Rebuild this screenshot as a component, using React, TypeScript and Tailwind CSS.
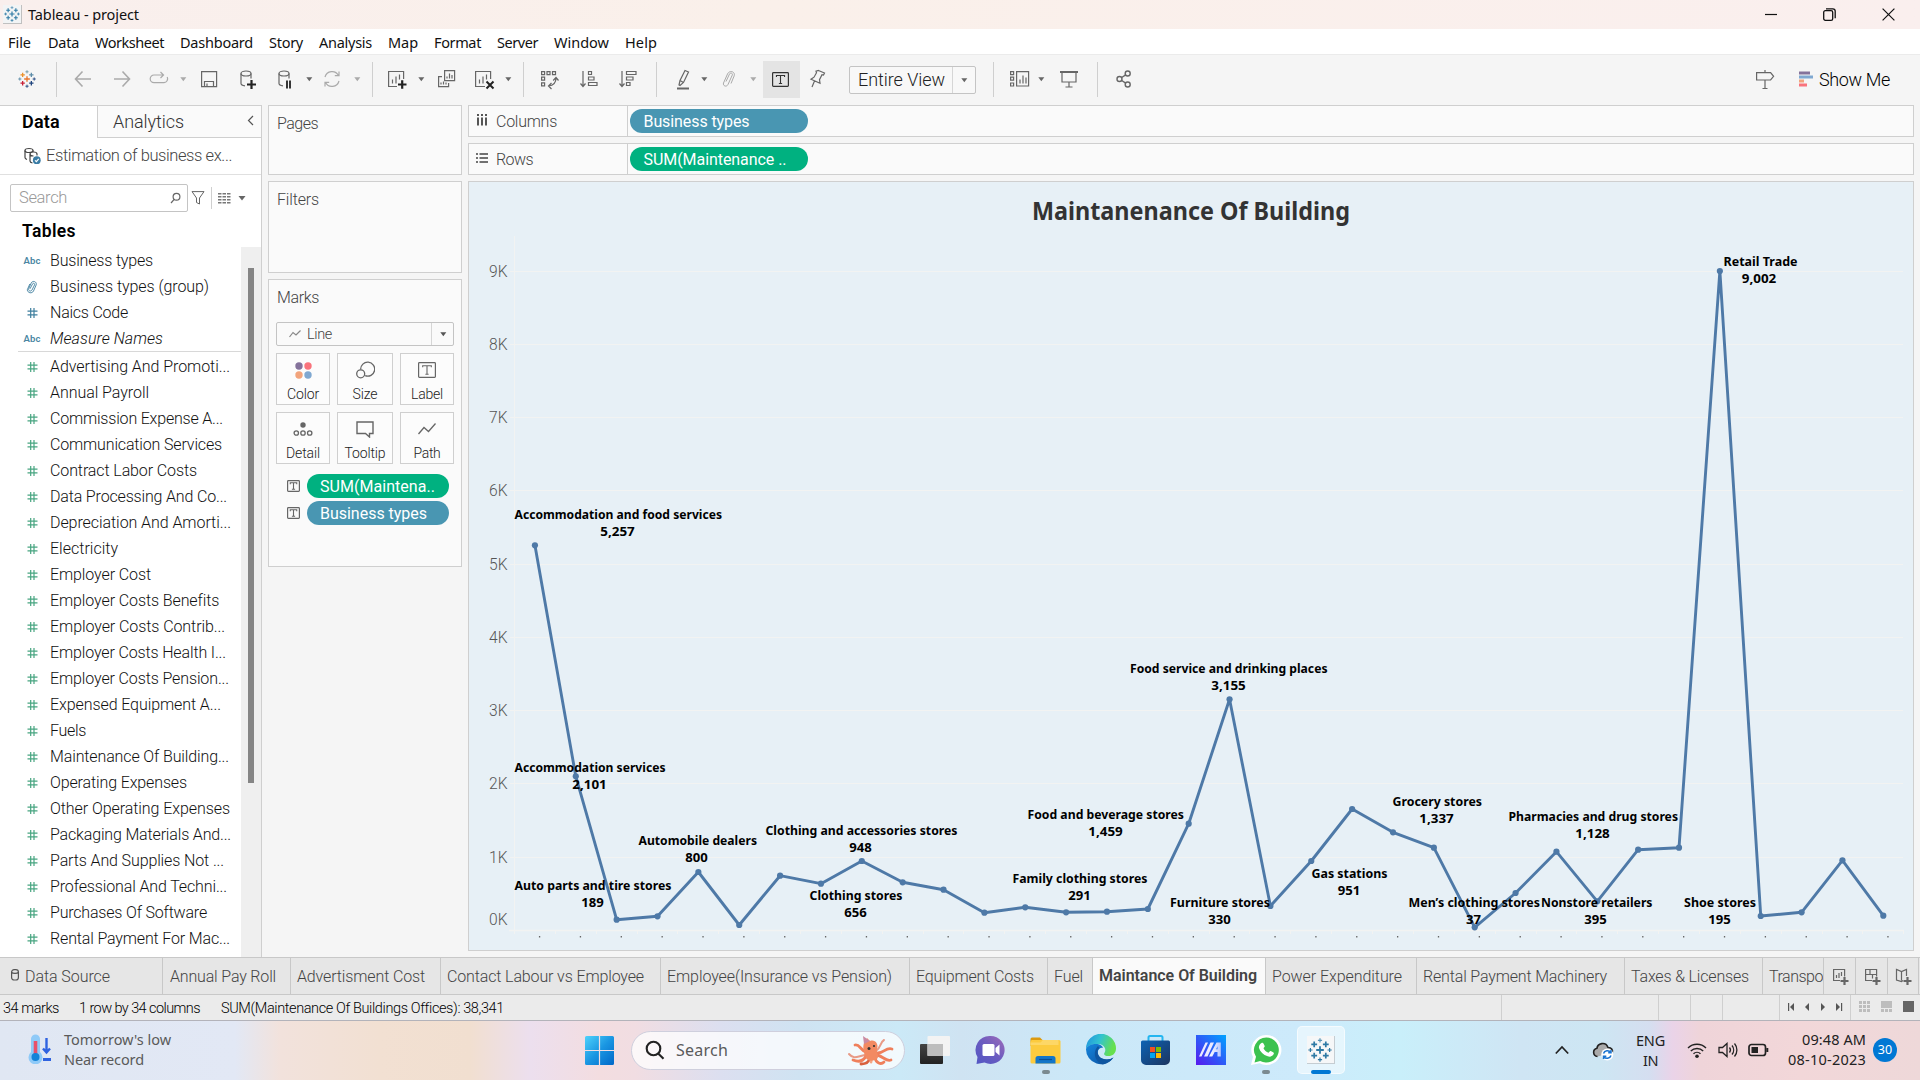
import { useLayoutEffect, useRef, useState, type ReactNode } from "react";

/** Text tracked so that it fills the given width. */
function Fit({ w, children, className = "" }: { w: number; children: string; className?: string }) {
  const ref = useRef<HTMLSpanElement>(null);
  const [spacing, setSpacing] = useState(0);
  useLayoutEffect(() => {
    const el = ref.current;
    if (!el) return;
    const natural = el.getBoundingClientRect().width;
    setSpacing((w - natural) / children.length);
  }, [w, children]);
  return (
    <span ref={ref} className={"inline-block whitespace-pre " + className} style={{ letterSpacing: spacing }}>
      {children}
    </span>
  );
}

function Icon({ w = 20, h = 24, className = "", sw = 1.2, children }: { w?: number; h?: number; className?: string; sw?: number; children: ReactNode }) {
  return (
    <svg width={w} height={h} viewBox={`0 0 ${w} ${h}`} fill="none" stroke="currentColor" strokeWidth={sw} className={"shrink-0 " + className}>
      {children}
    </svg>
  );
}

function Caret({ className = "" }: { className?: string }) {
  return (
    <svg width="8" height="8" viewBox="0 0 8 8" className={"shrink-0 " + className}>
      <path d="M1.300 2.200h6L4.300 6.200z" fill="currentColor" />
    </svg>
  );
}

const Sep = ({ className = "" }: { className?: string }) => <div className={"h-[35px] w-px shrink-0 bg-[#cfcfcf] " + className} />;

function Plus({ x, y, s, c, w = 1.4 }: { x: number; y: number; s: number; c: string; w?: number }) {
  return <path d={`M${x - s} ${y}H${x + s}M${x} ${y - s}V${y + s}`} stroke={c} strokeWidth={w} />;
}

function TableauMark({ size, mono = false, className = "" }: { size: number; mono?: boolean; className?: string }) {
  const c = mono
    ? ["#2f7aa5", "#2f7aa5", "#2f7aa5", "#2f7aa5", "#2f7aa5", "#5a95b8"]
    : ["#e8762d", "#eb9129", "#5c8ca8", "#c72037", "#1f447e", "#7099a6"];
  return (
    <svg width={size} height={size} viewBox="0 0 24 24" fill="none" className={"shrink-0 " + className}>
      <Plus x={12} y={12} s={3.8} c={c[0]} w={1.8} />
      <Plus x={6.2} y={6.4} s={2.9} c={c[1]} w={1.700} />
      <Plus x={17.8} y={6.4} s={2.9} c={c[2]} w={1.700} />
      <Plus x={6.2} y={17.6} s={2.9} c={c[3]} w={1.700} />
      <Plus x={17.8} y={17.6} s={2.9} c={c[4]} w={1.700} />
      <Plus x={12} y={2.4} s={2.1} c={c[5]} w={1.2} />
      <Plus x={12} y={21.6} s={2.1} c={c[4]} w={1.2} />
      <Plus x={2.4} y={12} s={2.1} c={c[2]} w={1.2} />
      <Plus x={21.6} y={12} s={2.1} c={c[4]} w={1.2} />
    </svg>
  );
}

function LabelT({ w, h, className = "" }: { w: number; h: number; className?: string }) {
  const cx = w / 2;
  const a = h * 0.27;
  return (
    <svg width={w} height={h} viewBox={`0 0 ${w} ${h}`} fill="none" stroke="currentColor" className={"shrink-0 " + className}>
      <rect x="0.6" y="0.6" width={w - 1.2} height={h - 1.2} rx="0.8" strokeWidth="1.2" />
      <path d={`M${cx - a} ${h / 2 - a + 1.5}V${h / 2 - a}H${cx + a}V${h / 2 - a + 1.5}M${cx} ${h / 2 - a}V${h / 2 + a}M${cx - 1.6} ${h / 2 + a}H${cx + 1.6}`} strokeWidth="1.1" />
    </svg>
  );
}

const menu: [string, number, string][] = [
  ["File", 23, "w-[40px]"],
  ["Data", 31, "w-[47px]"],
  ["Worksheet", 69, "w-[85px]"],
  ["Dashboard", 73, "w-[89px]"],
  ["Story", 34, "w-[50px]"],
  ["Analysis", 53, "w-[69px]"],
  ["Map", 30, "w-[46px]"],
  ["Format", 47, "w-[63px]"],
  ["Server", 41, "w-[57px]"],
  ["Window", 55, "w-[71px]"],
  ["Help", 32, "w-[40px]"],
];

function TitleBar() {
  return (
    <div className="flex h-[29px] items-center bg-linear-to-r from-[#f9efed] via-[#faf0ea] via-40% to-[#faefee] font-['Noto_Sans',sans-serif] text-[#111]">
      <div className="ml-[3px] flex size-[19px] items-center justify-center border-r border-b border-[#c0c0c0] bg-[#f2f4f5]">
        <TableauMark size={16} mono />
      </div>
      <Fit w={111} className="ml-[6px] text-[14.5px]">Tableau - project</Fit>
      <Icon w={12} h={12} className="ml-auto"><path d="M0 5.500h12" /></Icon>
      <Icon w={13} h={13} className="ml-[46px]" sw={1.3}>
        <rect x="0.7" y="2.7" width="9" height="9.6" rx="1.6" />
        <path d="M3 0.9h6.8a2.4 2.4 0 0 1 2.4 2.4v7" />
      </Icon>
      <Icon w={13} h={13} className="mr-[25px] ml-[46px]"><path d="M0.6 0.6l11.8 11.8M12.4 0.6L0.6 12.4" /></Icon>
    </div>
  );
}

function MenuBar() {
  return (
    <div className="flex h-[25px] items-center bg-white pt-px pl-2 font-['Noto_Sans',sans-serif] text-[14.5px] leading-[24px] text-[#111]">
      {menu.map(([t, w, c]) => (
        <div key={t} className={c}><Fit w={w}>{t}</Fit></div>
      ))}
    </div>
  );
}

function Toolbar() {
  return (
    <div className="flex h-[51px] items-center border-t border-[#ebebeb] bg-[#f5f5f5] pb-[2px] text-[#666]">
      <TableauMark size={18} className="ml-[18px]" />
      <Sep className="ml-5" />
      <Icon className="ml-4 text-[#aaa]" sw={1.6}><path d="M18 12H3M9.5 4.5L2.5 12l7 7.5" /></Icon>
      <Icon className="ml-[19px] text-[#aaa]" sw={1.6}><path d="M2 12h15M10.500 4.5l7 7.500-7 7.5" /></Icon>
      <Icon className="ml-[17px] text-[#aaa]"><path d="M14 8H5a3.8 3.8 0 0 0 0 7.600h10a3.8 3.8 0 0 0 3.200-5.500M11.500 5l3 3-3 3" /></Icon>
      <Caret className="ml-2.5 text-[#aaa]" />
      <Icon className="ml-3"><path d="M2.600 4.600h15v15h-15zM5.500 19.500v-5h9v5M8 19v-2.500" /></Icon>
      <Icon className="ml-[19px]">
        <ellipse cx="8" cy="6.500" rx="5" ry="2.500" /><path d="M3 6.500v10c0 1.200 1.500 2 4 2.300M13 6.500v5" /><path d="M9 17.500h9M13.500 13v9" stroke="#222" strokeWidth="2.200" />
      </Icon>
      <Icon className="ml-[19px]">
        <ellipse cx="7" cy="6.500" rx="5" ry="2.500" /><path d="M2 6.500v10c0 1.200 1.500 2 4 2.300M12 6.500v5" /><path d="M10 13.500v8M13 13.500v8" stroke="#222" strokeWidth="1.800" />
      </Icon>
      <Caret className="ml-2" />
      <Icon className="ml-[9px] text-[#aaa]"><path d="M3 10a7.300 7.300 0 0 1 13.500-1.500M17 14A7.300 7.300 0 0 1 3.500 15.500M17 4.500v4.200h-4.200M3 19.500v-4.200h4.200" /></Icon>
      <Caret className="ml-[11px] text-[#aaa]" />
      <Sep className="ml-[11px]" />
      <Icon className="ml-3.5"><path d="M10 19.500H1.600v-15h15V12M5.500 16.500v-4M9 16.500v-7M12.500 12.500v-5" /><path d="M11 17.500h8.500M15.200 13.300v8.500" stroke="#222" strokeWidth="2.200" /></Icon>
      <Caret className="ml-2.5" />
      <Icon className="ml-3"><path d="M7.600 3.600h10v10h-10zM10 11.500v-2M12.500 11.500v-5M15 11.500v-3.500M5 9.600H1.600v10h10v-3.500M4 17.500v-2M6.500 17.500v-3M9 17.500v-2" /></Icon>
      <Icon className="ml-[18px]"><path d="M10 19.500H0.600v-15h15V12M4.500 16.500v-4M8 16.500v-7M11.500 12.500v-5" /><path d="M11.500 14.500l7 7M18.500 14.500l-7 7" stroke="#222" strokeWidth="2" /></Icon>
      <Caret className="ml-[9px]" />
      <Sep className="ml-[11px]" />
      <Icon className="ml-4"><path d="M1.600 4.600h3v3h-3zM7 4.600h3v3H7zM12.500 4.600h3v3h-3zM1.600 10.200h3v3h-3zM1.600 15.800h3v3h-3zM16 11c0 4.500-2.500 7.500-7.500 8M13.200 13.500l2.800-3 2.500 3M11.500 16l-3 3 3 3" /></Icon>
      <Icon className="ml-[19px]"><path d="M4 4v15M1.500 16.500l2.500 3 2.500-3M9.500 4.500h3v3h-3zM9.500 10h5.500v3H9.500zM9.500 15.500h8.500v3H9.500z" /></Icon>
      <Icon className="ml-[19px]"><path d="M4 4v15M1.500 16.500l2.500 3 2.500-3M8.500 4.500h9.500v3H8.500zM8.500 10h6.500v3H8.500zM8.500 15.500h3.500v3H8.500z" /></Icon>
      <Sep className="ml-[18px]" />
      <Icon className="ml-4"><path d="M12 3.500l3.500 1.500-5 10.500-3.500 3-1-0.500 1-4.500zM7 13.500l3.500 2" /><path d="M4 21.500h12" strokeWidth="2" /></Icon>
      <Caret className="ml-[7px]" />
      <Icon className="ml-[11px] text-[#aaa]" sw={1}><path d="M7 14.500l3.500-7.500c.9-1.800 3.500-.8 2.800 1l-4.300 9.500c-1.500 3-5.400 1.400-4.500-1.500L8.500 7c2-4.300 8-2.500 6.700 1.800L12 16.500" /></Icon>
      <Caret className="ml-2.5 text-[#aaa]" />
      <div className="ml-1.5 flex h-[37px] w-[37px] shrink-0 items-center justify-center bg-[#e4e4e4] pr-[2px] text-[#333]"><LabelT w={17} h={15} /></div>
      <Icon className="ml-2"><path d="M10.500 3.500l6 2.500-1 2-1.500-0.300-2.500 5 0.500 3.500-9-4 3-2 2.500-4.500-0.500-1.500zM6.500 14l-2.500 6" /></Icon>
      <div className="mt-px ml-[21px] flex h-[28px] w-[127px] shrink-0 items-center rounded-[2px] border border-[#c4c4c4] bg-[#f8f8f8]">
        <Fit w={87} className="ml-2 font-['Roboto',sans-serif] text-[18px] font-light text-[#222]">Entire View</Fit>
        <div className="ml-auto flex h-full w-[23px] items-center justify-center border-l border-[#d6d6d6]"><Caret /></div>
      </div>
      <Sep className="ml-[17px]" />
      <Icon w={22} className="ml-[15px]"><path d="M1.600 4.600h3v3h-3zM1.600 10.200h3v3h-3zM1.600 16h3v3h-3zM7.600 4.600h12v14.400h-12zM11 16.500v-4M14 16.500v-8M17 16.500v-6" /></Icon>
      <Caret className="ml-1.5" />
      <Icon className="ml-3.5"><path d="M3 5.500v9.500h14V5.500M10 15v5M6.500 20h7" /><path d="M1 5h18" strokeWidth="2" /></Icon>
      <Sep className="ml-[18px]" />
      <Icon className="ml-4" sw={1.4}><circle cx="5.500" cy="12" r="2.500" /><circle cx="13.700" cy="6.500" r="2.500" /><circle cx="13.700" cy="17.500" r="2.500" /><path d="M7.700 10.500l4-2.700M7.700 13.500l4 2.700" /></Icon>
      <Icon className="ml-auto"><path d="M10 3v2.500M1.600 5.600h14l3 3.700-3 3.700h-14zM10 13v8M7.500 21.500h5" /></Icon>
      <svg width="16" height="16" viewBox="0 0 16 16" className="ml-[23px] shrink-0">
        <path d="M1 0.500h11v3H1z" fill="#84729b" /><path d="M1 4.500h14v3H1z" fill="#7fa8d1" /><path d="M1 8.500h5v3H1z" fill="#f2a47c" /><path d="M1 12.500h8v3H1z" fill="#f9737c" />
      </svg>
      <Fit w={71} className="mr-[30px] ml-[5px] font-['Roboto',sans-serif] text-[18px] font-light text-black">Show Me</Fit>
    </div>
  );
}

const dims: [string, number, string][] = [
  ["Business types", 103, "abc"],
  ["Business types (group)", 159, "clip"],
  ["Naics Code", 78, "hash"],
  ["Measure Names", 113, "abc"],
];
const measures: [string, number][] = [
  ["Advertising And Promoti...", 180],
  ["Annual Payroll", 99],
  ["Commission Expense A...", 173],
  ["Communication Services", 172],
  ["Contract Labor Costs", 147],
  ["Data Processing And Co...", 177],
  ["Depreciation And Amorti...", 181],
  ["Electricity", 68],
  ["Employer Cost", 101],
  ["Employer Costs Benefits", 169],
  ["Employer Costs Contrib...", 175],
  ["Employer Costs Health I...", 176],
  ["Employer Costs Pension...", 179],
  ["Expensed Equipment A...", 171],
  ["Fuels", 36],
  ["Maintenance Of Building...", 179],
  ["Operating Expenses", 137],
  ["Other Operating Expenses", 180],
  ["Packaging Materials And...", 181],
  ["Parts And Supplies Not ...", 174],
  ["Professional And Techni...", 177],
  ["Purchases Of Software", 157],
  ["Rental Payment For Mac...", 180],
];

function FieldIcon({ kind }: { kind: string }) {
  if (kind === "abc") return <Fit w={17} className="font-['Roboto',sans-serif] text-[9.500px] font-semibold text-[#4a86a2]">Abc</Fit>;
  if (kind === "clip")
    return (
      <Icon w={17} h={16} sw={0.9} className="text-[#3f7f9e]"><path d="M6 9.800l2.600-5c.8-1.200 2.500-.4 2 1L8 11c-1.200 2-4 .8-3.300-1.300L7.200 4c1.600-3 5.900-1.300 5 1.900L9.500 12c-1.500 3-6 2-6.200-1.200L5.800 5" /></Icon>
    );
  return (
    <Icon w={17} h={12} sw={1.2} className={kind === "hash" ? "text-[#3f7f9e]" : "text-[#48a581]"}><path d="M6.700 1v10M10 1v10M3.500 4.200h10M3.500 7.800h10" /></Icon>
  );
}

function Field({ name, w, kind, italic }: { name: string; w: number; kind: string; italic?: boolean }) {
  return (
    <div className="flex h-[26px] items-center pl-[23.5px]">
      <div className="flex w-[26.5px] items-center">{<FieldIcon kind={kind} />}</div>
      <Fit w={w} className={italic ? "italic" : ""}>{name}</Fit>
    </div>
  );
}

function DataPane() {
  return (
    <div className="flex w-[262px] shrink-0 flex-col border-t border-r border-[#cfcfcf] bg-white font-['Roboto',sans-serif] font-light text-[#111]">
      <div className="flex h-8 items-stretch text-[18px]">
        <div className="flex w-[97px] items-center pb-[2px] pl-[22px]"><Fit w={38} className="font-semibold text-black">Data</Fit></div>
        <div className="flex flex-1 items-center border-b border-l border-[#cfcfcf] bg-[#fafafa] pl-[15px]">
          <Fit w={71} className="text-[#333]">Analytics</Fit>
          <Icon w={7} h={11} className="mr-[7px] mb-[2px] ml-auto text-[#555]"><path d="M6 1L1.500 5.500l4.500 4.500" /></Icon>
        </div>
      </div>
      <div className="flex h-[37px] items-center border-b border-[#e0e0e0] pl-6 text-[16.5px] text-[#444]">
        <Icon w={17} h={18}>
          <ellipse cx="5" cy="3.500" rx="4" ry="2" /><path d="M1 3.500v7c0 1 .8 1.600 2 2M9 3.500v1M6 7c0-1.200 1.600-2 3.500-2s3.500.8 3.500 2v1.500M6 7v7c0 1 1 1.700 2.500 2M6 7c0 1.200 1.600 2 3.500 2" /><circle cx="12.800" cy="13.200" r="3.900" fill="#3a7ca5" stroke="none" /><path d="M11 13.300l1.400 1.400 2.300-2.800" stroke="#fff" />
        </Icon>
        <Fit w={186} className="ml-[5px]">Estimation of business ex...</Fit>
      </div>
      <div className="mt-[9px] flex h-[28px] items-center pl-2.5 text-[#666]">
        <div className="flex h-full w-[178px] items-center rounded-[2px] border border-[#c4c4c4] pr-1.5 pl-2">
          <Fit w={48} className="text-[16.5px] text-[#999]">Search</Fit>
          <Icon w={11} h={12} className="ml-auto"><circle cx="6.500" cy="4.700" r="3.400" /><path d="M4.200 7.300L1 11" /></Icon>
        </div>
        <Icon w={14} h={16} className="ml-[3px]" sw={1}><path d="M1 1.600h12L8.500 8v6l-3-1.500V8z" /></Icon>
        <div className="ml-[6px] h-[22px] w-px bg-[#cfcfcf]" />
        <svg width="13" height="11" viewBox="0 0 13 11" fill="#777" className="ml-1.5"><path d="M0 0h3.500v1.500H0zM4.500 0h3.500v1.500H4.500zM9 0h3.500v1.500H9zM0 3h3.500v1.500H0zM4.500 3h3.500v1.500H4.500zM9 3h3.500v1.500H9zM0 6h3.500v1.500H0zM4.500 6h3.500v1.500H4.500zM9 6h3.500v1.500H9zM0 9h3.500v1.500H0zM4.500 9h3.500v1.500H4.500zM9 9h3.500v1.500H9z" /></svg>
        <svg width="10" height="8" viewBox="0 0 10 8" className="ml-[6px]"><path d="M1.500 2h7L5 6.500z" fill="currentColor" /></svg>
      </div>
      <div className="flex h-[35px] items-center pt-[3px] pl-[22px] text-[17.5px]"><Fit w={54} className="font-semibold text-black">Tables</Fit></div>
      <div className="flex min-h-0 flex-1 text-[16px]">
        <div className="w-[241px] pt-px">
          {dims.map(([n, w, k]) => <Field key={n} name={n} w={w} kind={k} italic={n === "Measure Names"} />)}
          <div className="mt-[-1px] mb-[2px] ml-[18px] h-px bg-[#d8d8d8]" />
          {measures.map(([n, w]) => <Field key={n} name={n} w={w} kind="measure" />)}
        </div>
        <div className="flex-1 bg-[#efefef] pt-[21px] pl-[7px]"><div className="h-[515px] w-[6px] bg-[#858585]" /></div>
      </div>
    </div>
  );
}

function MarkButton({ label, w, children }: { label: string; w: number; children: ReactNode }) {
  return (
    <div className="flex h-[52px] flex-col items-center border border-[#cfcfcf] bg-white/40 text-[14px] text-[#222]">
      <div className="flex h-[32px] items-center text-[#666]">{children}</div>
      <Fit w={w} className="mt-px leading-[15px]">{label}</Fit>
    </div>
  );
}

function Cards() {
  return (
    <div className="ml-1.5 flex w-[194px] shrink-0 flex-col gap-1.5 font-['Roboto',sans-serif] text-[16px] font-light text-[#444]">
      <div className="h-[70px] border border-[#cfcfcf] bg-[#fafafa] pt-1.5 pl-2"><Fit w={41}>Pages</Fit></div>
      <div className="h-[92px] border border-[#cfcfcf] bg-[#fafafa] pt-1.5 pl-2"><Fit w={42}>Filters</Fit></div>
      <div className="h-[288px] border border-[#cfcfcf] bg-[#fafafa] pr-[7px] pl-[7px]">
        <div className="h-[42px] pt-1.5 pl-px"><Fit w={42}>Marks</Fit></div>
        <div className="flex h-[24px] items-center rounded-[2px] border border-[#c4c4c4] pl-3 text-[14.500px]">
          <Icon w={12} h={8} className="text-[#888]"><path d="M0.500 7L4 2.500l3 2.500 4.500-4.500" /></Icon>
          <Fit w={25} className="mt-px ml-1.5">Line</Fit>
          <div className="ml-auto flex h-full w-[22px] items-center justify-center border-l border-[#d6d6d6] text-[#555]"><Caret /></div>
        </div>
        <div className="mt-[7px] grid grid-cols-[54px_56px_54px] gap-x-[7px] gap-y-[7px]">
          <MarkButton label="Color" w={32}>
            <svg width="17" height="17" viewBox="0 0 17 17"><circle cx="4" cy="4" r="3.700" fill="#84729b" /><circle cx="13" cy="4" r="3.700" fill="#f9737c" /><circle cx="4" cy="13" r="3.700" fill="#f2a47c" /><circle cx="13" cy="13" r="3.700" fill="#7fa8d1" /></svg>
          </MarkButton>
          <MarkButton label="Size" w={25}><Icon w={20} h={18} sw={1.3}><path d="M5.700 8.500a7 7 0 1 1 4.500 6.200" /><circle cx="5.700" cy="12.800" r="4" /></Icon></MarkButton>
          <MarkButton label="Label" w={32}><LabelT w={18} h={16} /></MarkButton>
          <MarkButton label="Detail" w={34}><svg width="20" height="16" viewBox="0 0 20 16" fill="none" stroke="#666" strokeWidth="1.300"><circle cx="10" cy="4" r="2.700" fill="#666" stroke="none" /><circle cx="3.300" cy="12" r="2.200" /><circle cx="10" cy="12" r="2.200" /><circle cx="16.700" cy="12" r="2.200" /></svg></MarkButton>
          <MarkButton label="Tooltip" w={41}><Icon w={18} h={17} sw={1.4}><path d="M1 1h16v11.500h-3.500v3.500l-4-3.500H1z" /></Icon></MarkButton>
          <MarkButton label="Path" w={27}><Icon w={18} h={12} sw={1.3}><path d="M0.500 11L6 4.500l4.500 4 7-8" /></Icon></MarkButton>
        </div>
        <div className="mt-2.5 flex flex-col gap-[3px] pl-[11px] text-[#666]">
          <div className="flex items-center"><LabelT w={13} h={12} /><div className="ml-[7px] flex h-6 w-[142px] items-center rounded-full bg-[#00b180] pt-0.5 pl-[13px] font-normal text-white"><Fit w={115}>SUM(Maintena..</Fit></div></div>
          <div className="flex items-center"><LabelT w={13} h={12} /><div className="ml-[7px] flex h-6 w-[142px] items-center rounded-full bg-[#4996b2] pt-0.5 pl-[13px] font-normal text-white"><Fit w={107}>Business types</Fit></div></div>
        </div>
      </div>
    </div>
  );
}

function Shelf({ label, w, icon, pill, pw, color }: { label: string; w: number; icon: ReactNode; pill: string; pw: number; color: string }) {
  return (
    <div className="flex h-8 shrink-0 items-center border border-[#cfcfcf] bg-[#fafafa] pl-1.5 text-[16px] font-light text-[#444]">
      {icon}
      <div className="mt-[2px] ml-[7px] w-[131px]"><Fit w={w}>{label}</Fit></div>
      <div className="h-full w-px bg-[#cfcfcf]" />
      <div className={"ml-[2px] flex h-6 w-[178px] items-center rounded-full pt-0.5 pl-[13.5px] font-normal text-white " + color}><Fit w={pw}>{pill}</Fit></div>
    </div>
  );
}

const ys = [545.3, 776.3, 919.7, 916.3, 872, 925, 875.7, 883.7, 861, 882.3, 889.7, 912.7, 907.3, 912.3, 911.7, 909, 823.7, 699.3, 906, 861, 809, 832.3, 847.7, 927.3, 893, 851.7, 901.3, 849.7, 847.7, 271, 916, 912.3, 860.3, 915.7];
const STEP = 40.86;
const px = (i: number) => 514.5 + STEP * (i + 0.5);
const gridY = [271.5, 344.5, 417.5, 490.5, 564.5, 637.5, 710.5, 783.5, 857.5];
const axis: [string, number][] = [["9K", 271.5], ["8K", 344.5], ["7K", 417.5], ["6K", 490.5], ["5K", 564.5], ["4K", 637.5], ["3K", 710.5], ["2K", 783.5], ["1K", 857.5], ["0K", 919.5]];
const marks: [string, number, number, number, string, number][] = [
  ["Accommodation and food services", 514.5, 722, 519, "5,257", 617.5],
  ["Accommodation services", 514.5, 665.5, 772, "2,101", 589.5],
  ["Auto parts and tire stores", 514.5, 671.5, 890, "189", 592.5],
  ["Automobile dealers", 638.5, 757, 845, "800", 696.5],
  ["Clothing and accessories stores", 765.5, 957.5, 835, "948", 860.5],
  ["Clothing stores", 809.5, 902.5, 900, "656", 855.5],
  ["Family clothing stores", 1012.5, 1147.5, 883, "291", 1079.5],
  ["Food and beverage stores", 1027.5, 1184, 819, "1,459", 1105.5],
  ["Food service and drinking places", 1130, 1327.5, 673, "3,155", 1228.5],
  ["Furniture stores", 1170, 1270, 907, "330", 1219.5],
  ["Gas stations", 1311.5, 1387.5, 878, "951", 1349],
  ["Grocery stores", 1392.5, 1482, 806, "1,337", 1436.5],
  ["Men\u2019s clothing stores", 1408.5, 1540, 907, "37", 1473.5],
  ["Nonstore retailers", 1541, 1652.5, 907, "395", 1595.5],
  ["Pharmacies and drug stores", 1508.5, 1678, 821, "1,128", 1592.5],
  ["Shoe stores", 1684, 1756, 907, "195", 1719.5],
  ["Retail Trade", 1723.5, 1797.5, 266, "9,002", 1759],
];

function Chart() {
  return (
    <svg width="1444" height="768" viewBox="469 182 1444 768" className="block">
      <g fontFamily="Noto Sans, Open Sans, sans-serif" fontWeight="700">
        <text x="1032" y="220" fontSize="24.500" fill="#333" textLength="318" lengthAdjust="spacingAndGlyphs">Maintanenance Of Building</text>
      </g>
      <g stroke="#f2f3f2" strokeWidth="1">
        {gridY.map((y) => <path key={y} d={`M510 ${y}H1903`} />)}
        <path d="M514.500 236V934" />
        <path d="M509 930.500H1903.500" strokeWidth="1.500" />
        {ys.map((_, i) => <path key={i} d={`M${Math.round(514 + STEP * (i + 1)) + 0.5} 930V934`} />)}
      </g>
      <g fontFamily="Roboto, sans-serif" fontWeight="300" fontSize="16" fill="#555">
        {axis.map(([t, y]) => <text key={t} x="489" y={y + 5.500} textLength="18.500" lengthAdjust="spacingAndGlyphs">{t}</text>)}
      </g>
      {ys.map((_, i) => <rect key={i} x={px(i) + 4} y="936" width="1.300" height="1.500" fill="#666" />)}
      <polyline points={ys.map((y, i) => `${px(i)},${y}`).join(" ")} fill="none" stroke="#4e79a7" strokeWidth="2.900" strokeLinejoin="round" />
      {ys.map((y, i) => <circle key={i} cx={px(i)} cy={y} r="3.100" fill="#4e79a7" />)}
      <g fontFamily="Noto Sans, Open Sans, sans-serif" fontWeight="700" fontSize="13" fill="#000">
        {marks.map(([name, l, r, y, v, cx]) => (
          <g key={name}>
            <text x={l} y={y} textLength={r - l} lengthAdjust="spacingAndGlyphs">{name}</text>
            <text x={cx - (v.length > 3 ? 17.200 : v.length * 3.750)} y={y + 17} textLength={v.length > 3 ? 34.500 : v.length * 7.500} lengthAdjust="spacingAndGlyphs">{v}</text>
          </g>
        ))}
      </g>
    </svg>
  );
}

const tabs: [string, number, string][] = [
  ["Annual Pay Roll", 106, "w-[128px]"],
  ["Advertisment Cost", 128, "w-[150px]"],
  ["Contact Labour vs Employee", 197, "w-[220px]"],
  ["Employee(Insurance vs Pension)", 225, "w-[249px]"],
  ["Equipment Costs", 118, "w-[138px]"],
  ["Fuel", 29, "w-[45px]"],
  ["Maintance Of Building", 158, "w-[173px]"],
  ["Power Expenditure", 130, "w-[151px]"],
  ["Rental Payment Machinery", 184, "w-[208px]"],
  ["Taxes & Licenses", 118, "w-[138px]"],
  ["Transpo", 54, "w-[61px]"],
];

function SheetTabs() {
  return (
    <div className="flex h-[38px] shrink-0 border-y border-[#c8c8c8] bg-[#e6e6e6] font-['Roboto',sans-serif] text-[16px] font-light text-[#444]">
      <div className="flex w-[162px] shrink-0 items-center pt-0.5 pl-[11px]">
        <Icon w={8} h={12} className="mb-1 text-[#555]"><rect x="0.600" y="0.600" width="6.800" height="10.400" rx="2.500" /><path d="M0.600 3.500c1 1.200 5.800 1.200 6.800 0" /></Icon>
        <Fit w={85} className="ml-1.5">Data Source</Fit>
      </div>
      {tabs.map(([t, w, c]) => (
        <div key={t} className={"flex shrink-0 items-center border-l border-[#c8c8c8] " + c + (t.startsWith("Maint") ? " bg-[#fafafa] pb-px pl-1.5 font-semibold" : t === "Annual Pay Roll" ? " pt-0.5 pl-[7px]" : " pt-0.5 pl-1.5")}>
          <Fit w={w}>{t}</Fit>
        </div>
      ))}
      <div className="flex w-8 shrink-0 items-center justify-center border-l border-[#c8c8c8] pt-0.5 pl-0.5 text-[#666]"><Icon w={18} h={18} sw={1.2}><path d="M8 12.500H1.600v-11h11v7M4.500 10v-3M7 10V5M9.500 8V4" /><path d="M8.500 13h8M12.500 9v8" strokeWidth="2.200" /></Icon></div>
      <div className="flex w-8 shrink-0 items-center justify-center border-l border-[#c8c8c8] pt-0.5 pl-0.5 text-[#666]"><Icon w={18} h={18} sw={1.2}><path d="M8 12.500H1.600v-11h11v7M1.600 6.500h11M6 1.500v5M8.500 6.500v4" /><path d="M8.500 13h8M12.500 9v8" strokeWidth="2.200" /></Icon></div>
      <div className="flex w-8 shrink-0 items-center justify-center border-x border-[#c8c8c8] pt-0.5 pl-0.5 text-[#666]"><Icon w={18} h={18} sw={1.2}><path d="M8 12.500l-1.500 1-5-1.500V1.500l5 2 5-2V8M6.500 3.500v9" /><path d="M8.500 13h8M12.500 9v8" strokeWidth="2.200" /></Icon></div>
    </div>
  );
}

function StatusBar() {
  return (
    <div className="flex h-[26px] shrink-0 items-center border-b border-[#b3b3ba] bg-[#ebebeb] pl-[3px] font-['Roboto',sans-serif] text-[14.500px] font-light text-black">
      <Fit w={56} className="mt-0.5">34 marks</Fit>
      <Fit w={121} className="mt-0.5 ml-5">1 row by 34 columns</Fit>
      <Fit w={282} className="mt-0.5 ml-[21px]">SUM(Maintenance Of Buildings Offices): 38,341</Fit>
      <div className="ml-auto flex h-full items-stretch text-[#555]">
        <div className="w-[157px] border-l border-[#cfcfcf]" />
        <div className="w-8 border-l border-[#cfcfcf]" />
        <div className="w-8 border-l border-[#cfcfcf]" />
        <div className="w-[57px] border-l border-[#cfcfcf]" />
        <div className="flex w-[71px] items-center gap-2 border-l border-[#cfcfcf] pb-0.5 pl-[7px]">
          <svg width="8" height="8" viewBox="0 0 8 8" fill="currentColor"><path d="M1 0h1.200v8H1zM7 0v8L3 4z" /></svg>
          <svg width="8" height="8" viewBox="0 0 8 8" fill="currentColor"><path d="M6 0v8L2 4z" /></svg>
          <svg width="8" height="8" viewBox="0 0 8 8" fill="currentColor"><path d="M2 0v8l4-4z" /></svg>
          <svg width="8" height="8" viewBox="0 0 8 8" fill="currentColor"><path d="M6 0h1.200v8H6zM1 0v8l4-4z" /></svg>
        </div>
        <div className="flex w-[70px] items-center gap-[11px] border-l border-[#cfcfcf] pb-0.5 pl-[8px]">
          <svg width="11" height="11" viewBox="0 0 11 11" fill="#bdbdbd"><path d="M0 0h3v3H0zM4 0h3v3H4zM8 0h3v3H8zM0 4h3v3H0zM4 4h3v3H4zM8 4h3v3H8zM0 8h3v3H0zM4 8h3v3H4zM8 8h3v3H8z" /></svg>
          <svg width="11" height="11" viewBox="0 0 11 11" fill="#bdbdbd"><path d="M0 0h11v7H0zM0 8h3v3H0zM4 8h3v3H4zM8 8h3v3H8z" /></svg>
          <div className="size-[11px] bg-[#666]" />
        </div>
      </div>
    </div>
  );
}

function Octopus() {
  return (
    <svg width="50" height="32" viewBox="0 0 50 32" fill="none" stroke="#ef7f5b" strokeWidth="2.800" strokeLinecap="round">
      <path d="M20 18C14 16 14 10 9 11" /><path d="M19 21C12 22 8 26 3 20" stroke="#e89a86" strokeWidth="2" /><path d="M20 22c-3 6-8 6-13 4" /><path d="M24 24c-1 4-4 6-9 6" stroke="#d8603f" />
      <path d="M29 24c1 5 6 7 9 4" /><path d="M31 21c6 1 9 7 14 5" /><path d="M32 19c6 0 8-6 14-4" /><path d="M30 17c5-3 4-9 8-11" stroke="#e89a86" strokeWidth="2" /><path d="M26 22l-1 6" stroke="#f5a585" />
      <path d="M18 9l3-5 3 3c5-2 9 3 7 8-1 4 3 7 0 10-5 3-11 2-12-3-2-6-2-10-1-13z" fill="#f28a62" stroke="none" />
      <path d="M18 10l-1-8 7 5z" fill="#c98ba4" stroke="none" /><circle cx="23" cy="14.500" r="1.500" fill="#333" stroke="none" /><circle cx="28" cy="12" r="1.100" fill="#333" stroke="none" />
    </svg>
  );
}

function Taskbar() {
  return (
    <div className="flex h-[59px] shrink-0 items-center bg-[linear-gradient(90deg,#e0e7f3_0px,#e2e8f5_235px,#f2e2dc_280px,#f2e0d2_380px,#f1dfd0_470px,#ecdfee_530px,#f3dde0_600px,#f1dde2_635px,#dcdff0_720px,#cfe3f2_800px,#cbe9f7_900px,#cfe3f2_960px,#cbe8f8_1080px,#cdeafb_1300px,#c9effa_1400px,#cfe5f4_1520px,#cde6f3_1600px,#d5def0_1650px,#ead3e8_1673px,#efd4d9_1700px,#f2d7d9_1800px,#eed8d9_1920px)] font-['Noto_Sans',sans-serif] text-[#222]">
      <svg width="25" height="30" viewBox="0 0 25 30" className="mb-1 ml-[28px] shrink-0">
        <path d="M3 5a4.500 4.500 0 0 1 9 0v13a7 7 0 1 1-9 0z" fill="#8fcaf8" /><path d="M5.700 7h3.600v14H5.700z" fill="#e8506a" /><circle cx="7.500" cy="23" r="4" fill="#1483d8" /><path d="M18.500 4v14M15 14.500l3.500 4 3.500-4" stroke="#2f63e0" strokeWidth="2.400" fill="none" /><path d="M15 25.500h8" stroke="#2f63e0" strokeWidth="3" />
      </svg>
      <div className="mb-1 ml-[11px] flex w-[521px] shrink-0 flex-col text-[14.500px] leading-5 text-[#5a5a5a]">
        <Fit w={107} className="self-start">Tomorrow's low</Fit>
        <Fit w={80} className="self-start">Near record</Fit>
      </div>
      <svg width="29" height="29" viewBox="0 0 29 29" className="shrink-0">
        <defs><linearGradient id="win" x1="0" y1="0" x2="1" y2="1"><stop offset="0" stopColor="#4fd2fb" /><stop offset=".5" stopColor="#1a96e2" /><stop offset="1" stopColor="#0067c8" /></linearGradient></defs>
        <path d="M0 1.500A1.500 1.500 0 0 1 1.500 0H13.900V13.900H0zM15.100 0H27.500A1.500 1.500 0 0 1 29 1.500V13.900H15.100zM0 15.100H13.900V29H1.500A1.500 1.500 0 0 1 0 27.500zM15.100 15.100H29V27.500A1.500 1.500 0 0 1 27.500 29H15.100z" fill="url(#win)" />
      </svg>
      <div className="mb-px ml-[17px] flex h-[39px] w-[274px] shrink-0 items-center rounded-full border border-[#cfcfdd] bg-white/75 pl-[13px]">
        <Icon w={20} h={20} sw={2.100} className="text-[#222]"><circle cx="8.500" cy="8.500" r="6.800" /><path d="M13.200 13.500l5.300 5.300" /></Icon>
        <Fit w={52} className="ml-[11px] text-[16px] text-[#5a5a5a]">Search</Fit>
        <div className="mr-[8px] ml-auto"><Octopus /></div>
      </div>
      <div className="flex shrink-0 items-center pl-[15px]">
        <svg width="32" height="32" viewBox="0 0 32 32" className="mb-px"><defs><linearGradient id="tv" x1="0" y1="0" x2="0" y2="1"><stop offset="0" stopColor="#444" /><stop offset="1" stopColor="#222" /></linearGradient></defs><rect x="0" y="10" width="23" height="20" rx="1" fill="url(#tv)" /><rect x="7.500" y="2" width="22.500" height="20" rx="1" fill="#f3f3f3" /><path d="M7.500 10H23v12H7.500z" fill="#bdbdbd" /></svg>
        <svg width="32" height="32" viewBox="0 0 32 32" className="mb-px ml-[23px]"><defs><linearGradient id="ch" x1="1" y1="0" x2="0" y2="1"><stop offset="0" stopColor="#a06cb8" /><stop offset=".5" stopColor="#6a5bc0" /><stop offset="1" stopColor="#5257c4" /></linearGradient></defs><path d="M15.500 2a14 14 0 1 1-6 26.600L1.500 30l1-7A14 14 0 0 1 15.500 2z" fill="url(#ch)" /><rect x="7.500" y="10" width="12" height="12" rx="1.500" fill="#fff" /><path d="M20.500 14l4-3.500v11l-4-3.500z" fill="#fff" /></svg>
        <div className="relative mb-px ml-[23px]">
          <svg width="32" height="32" viewBox="0 0 32 32"><path d="M0.500 5a1.500 1.500 0 0 1 1.500-1.500h8L12.500 6v6h-12z" fill="#dc9a10" /><rect x="0.500" y="6" width="30" height="23.500" rx="1.500" fill="#fccb3e" /><path d="M0.500 8.500h10L13 6h15.500v5h-28z" fill="#fdd766" /><path d="M5.500 29.500v-5a2.500 2.500 0 0 1 2.500-2.500h15a2.500 2.500 0 0 1 2.500 2.500v5z" fill="#1376c8" /><path d="M9 25.500h13" stroke="#0a4f94" strokeWidth="1.200" /></svg>
          <div className="absolute top-[36px] left-[12px] h-1 w-2 rounded-full bg-[#7b8a90]" />
        </div>
        <svg width="32" height="32" viewBox="0 0 32 32" className="mb-px ml-[23px]"><defs><linearGradient id="e1" x1="0" y1="0" x2="1" y2=".3"><stop offset="0" stopColor="#1f8fe0" /><stop offset=".5" stopColor="#32c3d0" /><stop offset="1" stopColor="#66e04e" /></linearGradient><linearGradient id="e2" x1="0" y1="0" x2="1" y2="1"><stop offset="0" stopColor="#1586dd" /><stop offset="1" stopColor="#0c4f9e" /></linearGradient></defs><path d="M1 15A15 15 0 0 1 31 14.500c0 5-3.500 7.500-7.500 7.500-3.500 0-5-1.500-4.200-2.800 3-4.500-1-9.200-6.300-9.200C7 10 2 12 1 15z" fill="url(#e1)" /><path d="M1 15c1.500-4 7-5.500 11.500-5 3 .4 5 2 5.500 4-6-1.500-7.500 8-1 10.500 4.500 1.800 8.500 1 11.500-1A15 15 0 0 1 1 15z" fill="url(#e2)" /><path d="M13 12c-7 8-1 17 5 18.500 4.500-.8 8-3.200 10.500-7-3 2-7 2.800-11.500 1C12 22 11.500 16 14.500 14z" fill="#0f56a0" /></svg>
        <svg width="32" height="32" viewBox="0 0 32 32" className="mb-px ml-[23px]"><defs><linearGradient id="st" x1="0" y1="0" x2="1" y2="1"><stop offset="0" stopColor="#0c63b4" /><stop offset="1" stopColor="#1d3560" /></linearGradient></defs><path d="M8.500 8V3.500A1.500 1.500 0 0 1 10 2h11A1.500 1.500 0 0 1 22.500 3.500V8" fill="none" stroke="#25b6f0" strokeWidth="2" /><path d="M1 8a1.500 1.500 0 0 1 1.500-1.500h26A1.500 1.500 0 0 1 30 8v18a5 5 0 0 1-5 5H6a5 5 0 0 1-5-5z" fill="url(#st)" /><path d="M10 13h5v5h-5z" fill="#f25022" /><path d="M16 13h5v5h-5z" fill="#7fba00" /><path d="M10 19h5v5h-5z" fill="#00a4ef" /><path d="M16 19h5v5h-5z" fill="#ffb900" /></svg>
        <svg width="32" height="32" viewBox="0 0 32 32" className="mb-px ml-[23px]"><defs><linearGradient id="as" x1="1" y1="0" x2="0" y2="1"><stop offset="0" stopColor="#00a3ff" /><stop offset=".5" stopColor="#2d5cf8" /><stop offset="1" stopColor="#5a18ee" /></linearGradient><linearGradient id="asw" x1="0" y1="0" x2="1" y2="0"><stop offset="0" stopColor="#fff" /><stop offset="1" stopColor="#b9c8ff" /></linearGradient></defs><path d="M1 1h30v30H1z" fill="url(#as)" /><path d="M4 22.500L10.500 8.500H13L6.500 22.500zM9 22.500L15.500 8.500H19L12.500 22.500z" fill="#eceaff" /><path d="M14 22.500L21.500 8.500h4.300V22.500h-3.300v-4.500h-2.800l-2.400 4.500zM21.200 15.300h1.300v-3z" fill="url(#asw)" /></svg>
        <div className="relative mb-px ml-[23px]">
          <svg width="32" height="32" viewBox="0 0 32 32"><path d="M16 1a15 15 0 1 1-6.500 28.300L1 31l2-8A15 15 0 0 1 16 1z" fill="#fff" /><path d="M16.200 3.500a12.500 12.500 0 1 1-6 23.400L4.500 28.500l1.500-5.700A12.500 12.500 0 0 1 16.200 3.500z" fill="#3cc24f" /><path d="M11.500 9c1.500-1 2.200.3 3.200 3 .2 1-.8 1.500-1.200 2.300 1 2.300 2.700 3.700 5 4.500.8-.5 1.300-2 2.200-1.700 2.800 1.200 3.600 1.500 3 3-1 2.400-3.600 3-6 2.200-4.500-1.500-7.500-4.500-8.700-8.300-.4-2.200.9-4 2.500-5z" fill="#fff" /></svg>
          <div className="absolute top-[36px] left-[12px] h-1 w-2 rounded-full bg-[#7b8a90]" />
        </div>
        <div className="relative mb-px ml-[15px] flex size-[48px] items-center justify-center rounded-[5px] border border-white/60 bg-white/50">
          <div className="mr-px flex size-[28px] items-center justify-center border-r border-b border-[#c5cdd2] bg-[#f6f7f8]"><TableauMark size={24} mono /></div>
          <div className="absolute bottom-[-1px] left-[13px] h-1 w-5 rounded-full bg-[#0078d4]" />
        </div>
      </div>
      <Icon w={14} h={10} sw={1.700} className="mb-0.5 ml-auto"><path d="M0.800 8.500L7 2l6.200 6.500" /></Icon>
      <svg width="22" height="22" viewBox="0 0 22 22" className="mb-px ml-[23px] shrink-0"><path d="M5.500 17.500a4.200 4.200 0 0 1-.5-8.300C5.500 4.500 13.500 2 16 8.500c3.500-.2 5 2.500 4.300 5" fill="#aaa" stroke="#222" strokeWidth="1.600" /><circle cx="15.300" cy="15.500" r="6" fill="#fff" /><path d="M11.500 14.500a4 4 0 0 1 7.200-1M19 16.500a4 4 0 0 1-7.200 1M19 11v2.800h-2.800M11.500 20v-2.800h2.800" fill="none" stroke="#1a73d0" strokeWidth="1.500" /></svg>
      <div className="mb-0.5 ml-[22px] flex flex-col items-center text-[14.500px] leading-5"><Fit w={29}>ENG</Fit><Fit w={15}>IN</Fit></div>
      <Icon w={20} h={18} sw={1.400} className="mb-0.5 ml-[22px]"><path d="M1 7a12.800 12.800 0 0 1 18 0M3.800 10a8.800 8.800 0 0 1 12.400 0M6.500 12.800a5 5 0 0 1 7 0" /><circle cx="10" cy="15.300" r="1.800" fill="currentColor" stroke="none" /></Icon>
      <Icon w={20} h={18} sw={1.300} className="mb-0.5 ml-[11px]"><path d="M1 6.500h3.500L9 2.500v13l-4.500-4H1zM11.500 6.500a4 4 0 0 1 0 5M14 4.500a7 7 0 0 1 0 9M16.500 2.500a10 10 0 0 1 0 13" /></Icon>
      <Icon w={21} h={14} sw={1.700} className="mb-0.5 ml-[10px]"><rect x="1" y="1.500" width="16.500" height="11" rx="2.500" /><path d="M3.500 4h6.500v6H3.500z" fill="currentColor" stroke="none" /><path d="M19.300 5v4" strokeWidth="2" /></Icon>
      <div className="mb-1 ml-[19px] flex w-[78px] flex-col items-end text-[14.500px] leading-5"><Fit w={64}>09:48 AM</Fit><Fit w={78}>08-10-2023</Fit></div>
      <div className="mr-[23px] mb-px ml-[7px] flex size-6 items-center justify-center rounded-full bg-[#0078d4] text-[12.500px] text-white">30</div>
    </div>
  );
}

export default function App() {
  return (
    <div className="flex h-[1080px] w-[1920px] flex-col overflow-hidden bg-[#f5f5f5]">
      <TitleBar />
      <MenuBar />
      <Toolbar />
      <div className="flex h-[852px] shrink-0">
        <DataPane />
        <Cards />
        <div className="ml-1.5 flex w-[1446px] flex-col gap-1.5 font-['Roboto',sans-serif]">
          <Shelf label="Columns" w={61} pill="Business types" pw={106} color="bg-[#4996b2]" icon={<Icon w={14} h={14} sw={1.800} className="mb-0.5"><path d="M3 1v2M7 1v2M11 1v2M3 4.500v8M7 4.500v8M11 4.500v8" /></Icon>} />
          <Shelf label="Rows" w={37} pill="SUM(Maintenance .." pw={143} color="bg-[#00b180]" icon={<Icon w={14} h={12} sw={1.700} className="mb-0.5"><path d="M1 2h2M1 6h2M1 10h2M4.500 2H13M4.500 6H13M4.500 10H13" /></Icon>} />
          <div className="h-[770px] border border-[#cfcfcf] bg-[#e7f0f6]"><Chart /></div>
        </div>
      </div>
      <SheetTabs />
      <StatusBar />
      <Taskbar />
    </div>
  );
}
